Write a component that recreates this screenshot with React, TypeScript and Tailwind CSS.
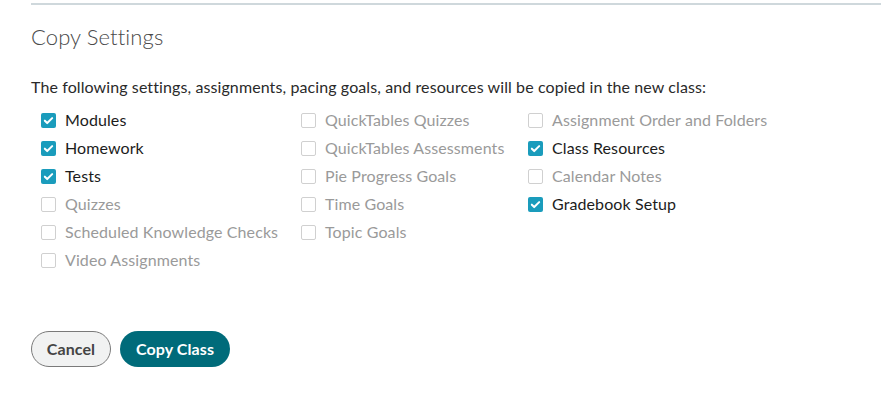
import React from "react";

type Item = { label: string; checked: boolean };

const columns: Item[][] = [
  [
    { label: "Modules", checked: true },
    { label: "Homework", checked: true },
    { label: "Tests", checked: true },
    { label: "Quizzes", checked: false },
    { label: "Scheduled Knowledge Checks", checked: false },
    { label: "Video Assignments", checked: false },
  ],
  [
    { label: "QuickTables Quizzes", checked: false },
    { label: "QuickTables Assessments", checked: false },
    { label: "Pie Progress Goals", checked: false },
    { label: "Time Goals", checked: false },
    { label: "Topic Goals", checked: false },
  ],
  [
    { label: "Assignment Order and Folders", checked: false },
    { label: "Class Resources", checked: true },
    { label: "Calendar Notes", checked: false },
    { label: "Gradebook Setup", checked: true },
  ],
];

function Check({ item }: { item: Item }) {
  return (
    <label className="flex h-[28px] items-center gap-[9px]">
      {item.checked ? (
        <span className="flex h-[15px] w-[15px] items-center justify-center rounded-[2px] bg-[#1a9cbc]">
          <svg width="11" height="11" viewBox="0 0 12 12" fill="none">
            <path d="M2 6.2l2.6 2.6L10 3.4" stroke="#fff" strokeWidth="2.2" strokeLinecap="round" strokeLinejoin="round" />
          </svg>
        </span>
      ) : (
        <span className="h-[15px] w-[15px] rounded-[2px] border border-[#d0d0d0] bg-white" />
      )}
      <span className={item.checked ? "text-[#1c1c1c]" : "text-[#9a9a9a]"}>{item.label}</span>
    </label>
  );
}

export default function App() {
  return (
    <div className="min-h-screen bg-white pl-[31px] pt-[3px] text-[16px] tracking-[0.1px] font-['Lato','Open_Sans',sans-serif]">
      <div className="h-[2px] bg-[#cfd8dc]" />
      <h2 className="mt-[15px] text-[22px] font-light text-[#4a4a4a]">Copy Settings</h2>
      <p className="mt-[22px] text-[16px] text-[#2a2a2a]">
        The following settings, assignments, pacing goals, and resources will be copied in the new class:
      </p>
      <div className="mt-[7px] flex pl-[10px]">
        <div className="w-[260px]">
          {columns[0].map((i) => (
            <Check key={i.label} item={i} />
          ))}
        </div>
        <div className="w-[227px]">
          {columns[1].map((i) => (
            <Check key={i.label} item={i} />
          ))}
        </div>
        <div>
          {columns[2].map((i) => (
            <Check key={i.label} item={i} />
          ))}
        </div>
      </div>
      <div className="mt-[57px] flex gap-[9px]">
        <button className="h-[36px] w-[80px] rounded-full border border-[#7a7a7a] bg-[#f1f2f2] text-[16px] font-bold text-[#444]">
          Cancel
        </button>
        <button className="h-[36px] w-[110px] rounded-full bg-[#006b7a] text-[16px] font-bold text-white">
          Copy Class
        </button>
      </div>
    </div>
  );
}
